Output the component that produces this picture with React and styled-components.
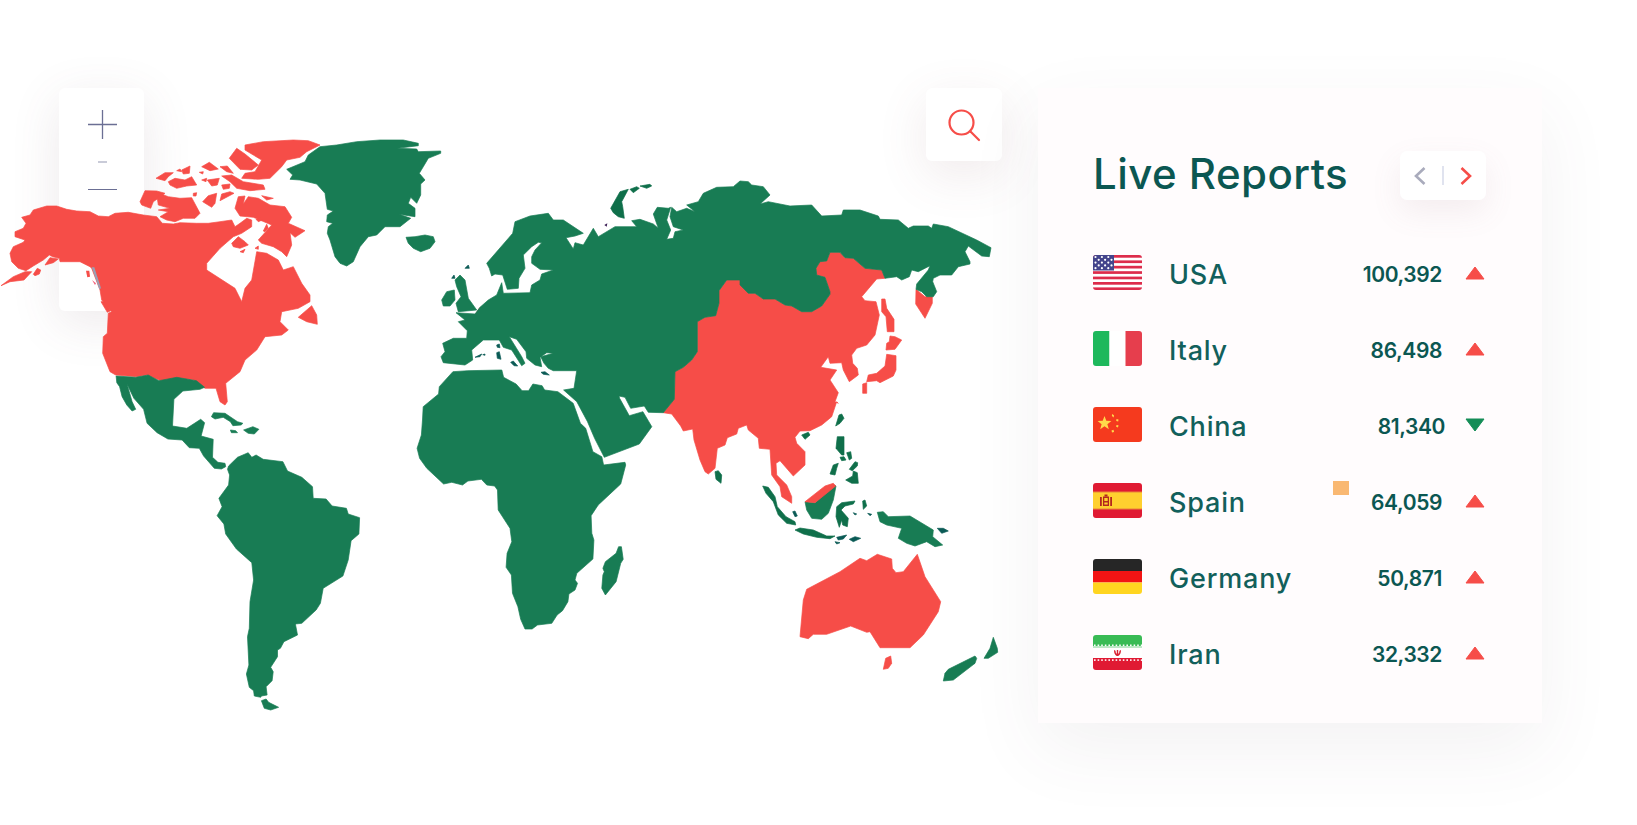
import React from 'react';
import styled, { createGlobalStyle } from 'styled-components';

const GlobalStyle = createGlobalStyle`
  html, body { margin: 0; padding: 0; background: #fff; }
  body { font-family: "Inter", "Liberation Sans", sans-serif; }
`;

const RED = '#f64d48';
const GREEN = '#187c54';
const DARK_GREEN = '#0f6f4a';
const TEAL = '#0b5752';

// the coastlines were read off crops of the picture, each crop has its own origin
const frame = (ox, oy, sx = 3, sy = 3) => (s) =>
  s.trim().split(/\s+/).map((p) => {
    const [x, y] = p.split(',').map(Number);
    return `${(ox + x / sx).toFixed(1)},${(oy + y / sy).toFixed(1)}`;
  }).join(' ');

const z3 = frame(0, 80);
const z4 = frame(500, 80);
const z5 = frame(100, 370, 2.8, 3);
const z6 = frame(640, 400);
const z7 = frame(420, 200);
const z8 = frame(640, 340);
const z9 = frame(130, 130);

const chinaBorder = `523,958 525,875 550,862 575,840 592,815 592,725 615,712 647,707 657,670 657,632 680,600 720,600 720,615 745,640 765,640 790,657 825,657 855,675 875,678 905,695 935,695 965,678 990,643 990,635 975,592 950,585 948,565 960,545 980,543 990,517 1020,517 1035,533 1060,535 1095,565 1145,570 1155,595`;

const eurasia = [
  z7(`70,488 63,470 75,455 68,430 100,415 140,415 142,392 115,365 135,360 108,338 165,342 180,322 205,300 230,285 245,248 250,280 330,278 335,255 360,240 365,222 400,210 360,208 335,190 335,170 345,150 365,128 355,127 335,140 310,165 315,205 297,235 295,265 262,268 248,225 225,222 215,228 208,205 200,190 278,100 285,65 330,48 385,40 400,60 430,60 490,100 465,108 438,113 460,147 465,128 490,135 520,85 535,110 585,80 650,80 635,62 660,58 700,72 715,85 700,42 712,22 745,25 752,22 740,60 752,90 740,118 760,115 765,95 790,90 760,80 750,50 755,22`),
  z4(`530,395 560,385 585,395 560,375 595,365 610,340 650,322 700,320 720,303 745,305 755,315 790,320 810,345 780,372 805,365 870,378 935,375 965,408 1025,405 1030,390 1080,390 1135,408 1140,418 1195,420 1225,445 1240,438 1285,438 1295,445 1300,432 1345,440 1430,480 1473,503 1468,530 1445,528 1405,498 1395,515 1410,545 1410,552 1375,560 1355,585 1320,585 1300,595 1298,605 1310,635 1300,650 1280,650 1265,635 1248,628 1250,612 1285,570 1290,557 1255,575 1235,570 1228,590 1205,600 1190,590 1155,595`),
  z4(chinaBorder.split(' ').reverse().join(' ')),
  z4(`490,998 445,997 433,978 392,985 375,952 357,948`),
  z5(`1455,85 1482,137 1520,125 1545,170 1510,222 1412,262 1385,205 1365,155 1335,95 1298,60`),
  z7(`462,565 470,512 400,512 385,505 372,490 362,470 400,460 380,458 360,472 365,500 345,495 320,475 318,455 290,418 268,410 305,470 315,490 305,497 275,450 250,442 238,420 190,420 155,450 158,480 135,495`),
].join(' ');

const asiaRed = [
  z4(chinaBorder),
  z4(`1130,597 1085,650 1095,662 1128,665 1138,705 1125,765 1100,795 1070,805 1055,825 1058,850 1072,865 1075,885 1048,905 1030,870 1025,848 990,850 985,830 962,862 1010,870 990,900 1015,938 1005,965 1015,970`),
  z8(`590,185 575,230 545,255 510,272 480,273 465,292 470,310 495,335 495,375 460,408 420,362 408,370 410,405 440,435 455,470 455,490 425,470 420,440 395,405 390,328 358,325 355,295 325,270 320,255 295,265 290,282 262,293 255,315 232,325 225,385 205,402 195,395 180,360 162,300 158,267 130,273 122,258 95,222 70,218`),
].join(' ');

const northAmerica = z3(`178,535 180,545 240,545 270,560 275,565 300,630 305,660 335,695 325,700 322,760 310,770 308,820 330,875 347,885 410,890 440,885 483,902 530,893 580,900 615,925 648,925 660,965 675,975 682,965 677,910 720,875 735,840 770,810 795,770 845,765 865,750 840,725 845,695 895,685 930,665 930,645 905,610 880,560 850,570 835,540 800,520 770,515 755,600 735,625 725,665 705,625 620,570 620,550 660,505 700,470 725,460 755,440 755,420 740,415 720,430 705,440 695,420 660,425 625,430 590,430 540,428 520,432 487,430 470,410 430,405 385,397 345,400 325,410 295,408 270,395 230,393 200,388 170,378 140,378 100,390 90,405 65,412 78,430 70,445 45,455 45,470 75,480 70,487 40,500 30,520 35,545 55,565 78,572 100,558 130,540 148,525 158,530`);

const redShapes = [
  northAmerica,
  z3(`3,617 40,590 75,575 95,575 72,600 30,605`),
  z3(`100,583 112,565 122,570 118,582 105,587`),
  z3(`135,555 150,533 175,537 160,548`),
  z3(`303,665 315,665 332,692 322,697`),
  z3(`895,712 935,677 950,705 952,733 920,725`),
  z9(`78,145 105,128 130,128 115,140 105,152`),
  z9(`140,122 150,117 155,125`),
  z9(`155,120 180,108 178,130 160,132`),
  z9(`115,155 135,145 165,150 185,140 200,165 170,168 140,175 120,165`),
  z9(`215,110 238,97 265,117 240,122`),
  z9(`270,110 292,108 310,130 290,125`),
  z9(`208,127 220,125 218,132`),
  z9(`215,150 230,145 228,155`),
  z9(`232,150 268,145 262,165 245,168`),
  z9(`275,165 300,162 298,175 280,178`),
  z9(`275,138 305,135 340,155 400,165 405,178 360,182 320,175 300,155`),
  z9(`190,190 200,188 198,198 190,198`),
  z9(`275,192 300,185 312,190 270,212`),
  z9(`235,197 260,190 255,220 245,232 218,215`),
  z9(`395,197 430,205 410,210`),
  z9(`30,215 45,182 80,183 105,190 85,205 70,215 62,235 35,225`),
  z9(`88,190 115,200 150,205 185,203 210,250 195,265 160,265 135,275 110,270 90,260 115,245 85,240 120,235 85,225 82,205`),
  z9(`345,45 400,35 490,30 535,32 570,45 530,65 510,82 470,90 455,110 420,145 385,148 335,145 345,130 375,125 395,90 370,75 345,60`),
  z9(`320,55 345,72 385,105 365,120 330,118 298,85`),
  z9(`315,235 325,200 345,198 340,222 355,200 385,205 420,225 465,230 485,262 475,280 525,302 495,322 480,308 485,345 470,380 455,365 430,350 395,340 385,330 425,285 370,262 330,258`),
  z9(`378,268 392,262 397,270 385,275`),
  z9(`400,303 410,283 415,295 405,305`),
  z9(`305,340 325,320 345,335 355,345 330,355 310,350`),
  z9(`330,365 345,358 340,368`),
  z9(`375,355 385,348 385,358`),
  z7(`165,345 180,322 205,327 208,345 180,350`),
  asiaRed,
  z4(`1248,628 1275,650 1297,650 1297,670 1275,715 1247,672`),
  z4(`1145,657 1155,657 1160,685 1182,718 1182,755 1162,755 1158,710 1145,695`),
  z4(`1170,768 1185,770 1205,780 1185,808 1158,810 1160,790 1168,785`),
  z4(`1160,823 1188,827 1188,870 1180,888 1140,908 1130,902 1100,905 1105,885 1130,880 1155,858`),
  z4(`1088,912 1100,908 1100,940 1088,940`),
  z6(`480,710 490,600 500,568 600,515 660,475 680,482 712,463 755,477 757,505 768,518 790,515 832,463 855,530 902,605 895,635 850,705 810,743 720,743 690,695 680,697 632,678 560,703 520,703 505,716`),
  z6(`737,775 752,768 755,790 745,805 730,808`),
];

const greenShapes = [
  eurasia,
  z3(`860,268 915,245 925,225 960,200 1010,195 1070,185 1140,180 1210,180 1255,190 1255,197 1192,205 1250,207 1255,215 1322,213 1322,220 1285,235 1270,260 1258,280 1275,300 1262,312 1262,345 1250,370 1232,352 1225,370 1245,385 1245,410 1198,403 1232,415 1200,440 1155,440 1130,465 1105,470 1080,500 1060,545 1040,558 1020,550 1005,530 990,480 982,460 985,440 998,430 980,425 982,405 1000,393 982,388 975,340 950,312 900,300 870,298 878,285`),
  z3(`1218,472 1245,470 1275,465 1300,470 1305,485 1290,505 1262,515 1240,505 1225,490`),
  z7(`105,240 120,225 135,240 145,295 170,330 115,335 108,310 123,290 110,260`),
  z7(`65,300 80,275 103,270 105,300 90,318 70,318`),
  z5(`45,18 100,22 135,15 165,32 215,22 270,32 293,52 280,58 232,63 207,88 203,168 243,175 282,148 293,158 283,198 317,208 315,262 330,277 350,280 352,290 340,297 320,295 290,258 278,235 250,233 230,210 190,207 160,188 132,160 122,118 95,85 76,43 90,95 100,118 90,123 75,105 62,80 55,50 47,38`),
  z5(`312,140 318,128 350,130 385,155 400,160 395,165 372,167 365,155 345,142 322,147`),
  z5(`365,180 380,182 385,188 368,188`),
  z5(`402,180 428,170 445,178 432,192 415,190`),
  z5(`360,288 385,262 415,248 425,262 437,255 457,268 512,275 525,303 565,322 595,350 597,385 633,387 650,408 690,415 695,432 727,443 725,492 703,512 695,570 680,618 625,655 617,700 605,720 565,760 547,762 553,795 515,815 505,835 497,840 497,860 478,892 485,905 482,932 465,950 468,975 452,978 450,982 432,978 430,962 418,952 410,912 417,885 413,800 418,775 420,695 430,630 425,578 382,537 352,492 347,462 328,437 342,410 333,385 360,345 363,315 357,298`),
  z5(`452,992 465,987 472,997 500,1012 478,1020 460,1015`),
  z5(`988,5 1030,2 1125,0 1130,22 1165,42 1182,62 1200,62 1212,42 1238,47 1245,60 1282,65 1325,100 1345,160 1360,175 1380,245 1405,260 1410,285 1470,277 1472,285 1458,342 1395,405 1375,437 1377,490 1383,510 1380,567 1335,610 1330,630 1337,640 1330,660 1313,672 1310,695 1295,722 1280,735 1265,760 1225,765 1210,777 1190,777 1178,748 1170,710 1155,670 1152,615 1137,592 1140,550 1153,515 1148,475 1115,420 1113,360 1105,348 1083,345 1068,328 1030,333 1015,345 985,337 962,342 915,295 895,265 888,235 900,195 903,150 905,110 948,72 950,50`),
  z5(`1408,595 1415,575 1445,550 1452,530 1460,530 1465,568 1458,580 1445,635 1415,675 1405,655 1408,615 1412,605`),
  z6(`495,305 525,308 582,255 588,258 580,300 565,340 545,358 515,355 500,330`),
  z6(`712,337 730,335 745,350 810,348 880,390 878,410 908,435 885,440 860,425 825,438 800,430 775,415 785,385 740,375 720,365`),
  z6(`910,843 915,820 925,808 1005,768 1010,775 1005,790 940,840`),
  z6(`1032,775 1050,745 1060,712 1072,745 1073,757 1045,775`),
];

const darkGreenShapes = [
  z4(`332,385 360,335 385,328 365,365 368,380 373,415 355,410 340,398`),
  z4(`390,328 410,320 418,325 400,338`),
  z4(`420,318 450,313 455,318 440,325`),
  z6(`587,78 597,45 605,42 612,55 600,70`),
  z6(`485,105 505,97 510,105 495,118`),
  z6(`225,215 235,212 245,225 243,250 228,238`),
  z6(`592,110 612,110 612,165 605,165 588,145`),
  z6(`600,172 612,170 618,180 605,182`),
  z6(`620,158 632,155 635,175 628,180`),
  z6(`570,222 580,195 595,190 590,205 585,225`),
  z6(`628,208 645,185 653,188 652,198 637,212`),
  z6(`617,240 638,228 640,213 652,218 655,250 635,250`),
  z6(`368,258 385,262 405,290 412,320 438,350 465,365 467,375 440,370 415,345 400,305 378,280`),
  z6(`590,320 605,308 645,303 640,312 615,318 603,330 625,355 622,380 608,375 605,360 598,382 588,350`),
  z6(`668,303 675,300 680,318 670,328`),
  z6(`465,390 480,384 520,390 560,408 585,408 570,416 530,412 490,402`),
];

const isletShapes = [
  z7(`95,235 102,225 105,235`),
  z7(`135,205 145,195 148,205`),
  z7(`165,472 185,462 180,470`),
  z7(`188,464 195,462 195,466`),
  z7(`230,435 238,432 240,443 232,442`),
  z7(`230,458 238,455 243,478 232,475`),
  z7(`272,487 280,483 293,498 282,497`),
  z7(`363,517 375,515 388,525 370,523`),
  z6(`458,335 465,333 472,348 465,350`),
  z6(`640,338 650,342 645,345`),
  z6(`683,340 695,343 690,347`),
  z6(`590,412 620,405 610,417 595,420`),
  z6(`585,425 600,428 590,432`),
  z6(`628,418 645,410 662,415 640,425`),
  z6(`892,385 910,385 925,393 905,400`),
];

const Stage = styled.div`
  position: relative;
  box-sizing: border-box;
  width: 1637px;
  height: 825px;
  padding: 88px 95px 0 59px;
  display: flex;
  align-items: flex-start;
  overflow: hidden;
  background: #fff;
`;

const MapDrawing = styled.svg`
  position: absolute;
  inset: 0;
  width: 1637px;
  height: 825px;
  pointer-events: none;
`;

const Land = styled.polygon`
  fill: ${(p) => p.$color};
  stroke: ${(p) => p.$color};
  stroke-width: 0.7;
  stroke-linejoin: round;
`;

const ZoomCard = styled.div`
  width: 85px;
  height: 223px;
  box-sizing: border-box;
  padding: 22px 0 0 2px;
  background: #fff;
  border-radius: 6px;
  box-shadow: 0 12px 50px rgba(110, 70, 90, 0.12);
  display: flex;
  flex-direction: column;
  align-items: center;
`;

const ZoomDash = styled.div`
  width: ${(p) => (p.$small ? 9 : 29)}px;
  height: ${(p) => (p.$small ? 1.5 : 1.3)}px;
  margin-top: ${(p) => (p.$small ? 22 : 26)}px;
  background: ${(p) => (p.$small ? '#c9cbd8' : '#6b6f94')};
`;

const SearchCard = styled.div`
  width: 76px;
  height: 73px;
  margin-left: auto;
  margin-right: 36px;
  background: #fff;
  border-radius: 6px;
  box-shadow: 0 14px 50px rgba(130, 80, 90, 0.12);
  display: flex;
  align-items: center;
  justify-content: center;
`;

const Panel = styled.section`
  position: relative;
  box-sizing: border-box;
  width: 504px;
  height: 635px;
  padding: 63px 56px 0 55px;
  background: #fffcfd;
  box-shadow: 0 26px 70px rgba(90, 70, 90, 0.07);
`;

const Header = styled.header`
  display: flex;
  align-items: center;
  justify-content: space-between;
  height: 49px;
  margin-bottom: 55px;
`;

const Title = styled.h2`
  margin: 0 0 4px 0;
  font-size: 42px;
  font-weight: 500;
  letter-spacing: 0.45px;
  line-height: 49px;
  color: ${TEAL};
`;

const Pager = styled.div`
  width: 86px;
  height: 49px;
  box-sizing: border-box;
  padding: 0 14px 0 14px;
  background: #fff;
  border-radius: 7px;
  box-shadow: 0 12px 30px rgba(150, 110, 120, 0.1);
  display: flex;
  align-items: center;
  justify-content: space-between;
`;

const PagerDivider = styled.span`
  width: 2px;
  height: 19px;
  background: #e0e3ef;
`;

const Rows = styled.ul`
  list-style: none;
  margin: 0;
  padding: 0;
  display: flex;
  flex-direction: column;
  gap: 41px;
`;

const Row = styled.li`
  display: flex;
  align-items: center;
  height: 35px;
`;

const FlagBox = styled.svg`
  width: 49px;
  height: 35px;
  border-radius: 3px;
  flex: none;
`;

const Name = styled.span`
  margin-left: 27px;
  font-size: 27px;
  font-weight: 500;
  letter-spacing: 0.8px;
  color: #12605b;
  position: relative;
  top: 2px;
`;

const Count = styled.span`
  margin-left: auto;
  margin-right: ${(p) => (p.$near ? 20 : 23)}px;
  font-size: 21px;
  font-weight: 600;
  letter-spacing: -0.4px;
  color: ${TEAL};
  position: relative;
  top: 2px;
`;

const Marker = styled.span`
  position: absolute;
  left: 295px;
  top: 393px;
  width: 16px;
  height: 14px;
  background: #f9b872;
`;

const Trend = ({ down }) => (
  <svg width="20" height="14" viewBox="0 0 20 14" style={{ marginRight: 1, flex: 'none' }}>
    <path
      d={down ? 'M1 1H19L10 13Z' : 'M10 1L19 13H1Z'}
      fill={down ? '#148d57' : RED}
      stroke={down ? '#148d57' : RED}
      strokeWidth="1"
      strokeLinejoin="round"
    />
  </svg>
);

const FlagUSA = () => {
  const stars = [];
  for (let y = 0; y < 5; y += 1) {
    for (let x = 0; x < 6; x += 1) {
      if ((x + y) % 2 === 0) stars.push(<circle key={`${x}-${y}`} cx={2.5 + x * 3.2} cy={2 + y * 2.8} r="1.1" fill="#fff" />);
    }
  }
  return (
    <FlagBox viewBox="0 0 49 35">
      <rect width="49" height="35" fill="#fff" />
      {[0, 1, 2, 3, 4, 5, 6].map((i) => (
        <rect key={i} y={i * 5.4} width="49" height="2.7" fill="#dd2c4b" />
      ))}
      <rect width="21" height="15.5" fill="#44458c" />
      {stars}
    </FlagBox>
  );
};

const FlagItaly = () => (
  <FlagBox viewBox="0 0 49 35">
    <rect width="16.5" height="35" fill="#1eb85c" />
    <rect x="16.5" width="16" height="35" fill="#fff" />
    <rect x="32.5" width="16.5" height="35" fill="#e63e4d" />
  </FlagBox>
);

const FlagChina = () => (
  <FlagBox viewBox="0 0 49 35">
    <rect width="49" height="35" fill="#f53a1e" />
    <path d="M11.5 9l1.8 4.8 5.1.2-4 3.2 1.4 5-4.3-2.9-4.3 2.9 1.4-5-4-3.2 5.1-.2z" fill="#ffd84a" />
    <path d="M19 7l2 1.2-.3 2.2-1.8-1.3zM23.5 12l2 .4-.3 2-2-.4zM23.5 18l2 .2-.5 2.2-1.9-.7zM18.5 23.5l2-.7.6 2.1-2.1.7z" fill="#ffd84a" />
  </FlagBox>
);

const FlagSpain = () => (
  <FlagBox viewBox="0 0 49 35">
    <rect width="49" height="35" fill="#e01a33" />
    <rect y="9" width="49" height="17" fill="#ffd02f" />
    <rect y="8.5" width="49" height="1" fill="#e8853a" />
    <rect y="25.5" width="49" height="1" fill="#e8853a" />
    <path d="M7 14h1.8v9H7zM17.2 14H19v9h-1.8zM10 13.5h6V23h-6z" fill="#b4261f" />
    <rect x="11.3" y="15" width="3.4" height="3" fill="#ffd02f" />
    <rect x="11.3" y="19.5" width="3.4" height="2" fill="#ffd02f" />
    <rect x="11.5" y="11.5" width="3" height="2" fill="#b4261f" />
  </FlagBox>
);

const FlagGermany = () => (
  <FlagBox viewBox="0 0 49 35">
    <rect width="49" height="12" fill="#262626" />
    <rect y="12" width="49" height="11.5" fill="#f21414" />
    <rect y="23.5" width="49" height="11.5" fill="#ffd520" />
  </FlagBox>
);

const FlagIran = () => {
  const ticks = [];
  for (let x = 1; x < 49; x += 3.6) {
    ticks.push(<rect key={`t${x}`} x={x} y="9.5" width="1.6" height="1.6" fill="#fff" />);
    ticks.push(<rect key={`b${x}`} x={x} y="24.3" width="1.6" height="1.6" fill="#fff" />);
  }
  return (
    <FlagBox viewBox="0 0 49 35">
      <rect width="49" height="11" fill="#39bb55" />
      <rect y="11" width="49" height="2" fill="#bde8c6" />
      <rect y="13" width="49" height="10" fill="#fff" />
      <rect y="23" width="49" height="12" fill="#e01a33" />
      {ticks}
      <path d="M21 15c0 3.5 1.5 6 3.5 6s3.5-2.5 3.5-6l-1.5.8-.5 2.7h-.8V15h-1.4v3.5h-.8l-.5-2.7z" fill="#d92231" />
    </FlagBox>
  );
};

const reports = [
  { name: 'USA', count: '100,392', flag: FlagUSA },
  { name: 'Italy', count: '86,498', flag: FlagItaly },
  { name: 'China', count: '81,340', flag: FlagChina, down: true, near: true },
  { name: 'Spain', count: '64,059', flag: FlagSpain },
  { name: 'Germany', count: '50,871', flag: FlagGermany },
  { name: 'Iran', count: '32,332', flag: FlagIran },
];

export default function App() {
  return (
    <Stage>
      <GlobalStyle />
      <ZoomCard>
        <svg width="29" height="29" viewBox="0 0 29 29">
          <path d="M14.5 0V29M0 14.5H29" stroke="#6b6f94" strokeWidth="1.3" fill="none" />
        </svg>
        <ZoomDash $small />
        <ZoomDash />
      </ZoomCard>

      <MapDrawing viewBox="0 0 1637 825">
        {redShapes.map((p, i) => <Land key={`r${i}`} points={p} $color={RED} />)}
        <polygon points={z3('275,562 283,562 303,625 298,628')} fill="#9aa0b5" />
        <polygon points={z3('258,572 268,572 270,590 262,592')} fill={RED} />
        <polygon points={z3('276,600 288,610 285,615')} fill="#f4607a" />
        {greenShapes.map((p, i) => <Land key={`g${i}`} points={p} $color={GREEN} />)}
        {darkGreenShapes.map((p, i) => <Land key={`d${i}`} points={p} $color={DARK_GREEN} />)}
        {isletShapes.map((p, i) => <Land key={`s${i}`} points={p} $color="#0a5a55" />)}
        <Land points={z6('495,305 555,258 580,250 587,258 525,308')} $color={RED} />
        <polygon points={z4('313,435 322,430 320,440')} fill="#3c1f55" />
      </MapDrawing>

      <SearchCard>
        <svg width="34" height="34" viewBox="0 0 34 34" fill="none" stroke={RED} strokeWidth="2.2" strokeLinecap="round">
          <circle cx="14.5" cy="14.5" r="12" />
          <path d="M23.5 23.5L32 32" />
        </svg>
      </SearchCard>

      <Panel>
        <Header>
          <Title>Live Reports</Title>
          <Pager>
            <svg width="12" height="18" viewBox="0 0 12 18" fill="none" stroke="#a9abbc" strokeWidth="2.6">
              <path d="M10.5 1L2 9l8.5 8" />
            </svg>
            <PagerDivider />
            <svg width="12" height="18" viewBox="0 0 12 18" fill="none" stroke={RED} strokeWidth="2.6">
              <path d="M1.5 1L10 9l-8.5 8" />
            </svg>
          </Pager>
        </Header>
        <Rows>
          {reports.map((r) => (
            <Row key={r.name}>
              <r.flag />
              <Name>{r.name}</Name>
              <Count $near={r.near}>{r.count}</Count>
              <Trend down={r.down} />
            </Row>
          ))}
        </Rows>
        <Marker />
      </Panel>
    </Stage>
  );
}
